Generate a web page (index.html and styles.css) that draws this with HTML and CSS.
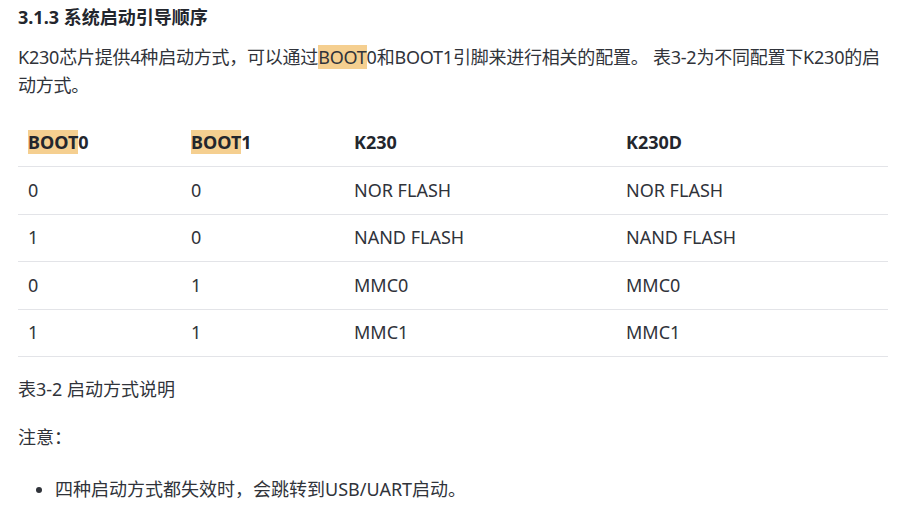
FILE: index.html
```html
<!DOCTYPE html>
<html lang="zh-CN">
<head>
<meta charset="utf-8">
<title>3.1.3 系统启动引导顺序</title>
<link rel="stylesheet" href="styles.css">
</head>
<body>
<main class="doc">
  <h3 class="title">3.1.3 系统启动引导顺序</h3>
  <p class="para">K230芯片提供4种启动方式，可以通过<mark class="hl">BOOT</mark>0和BOOT1引脚来进行相关的配置。 表3-2为不同配置下K230的启动方式。</p>
  <table class="tbl">
    <colgroup>
      <col class="c-narrow"><col class="c-narrow"><col class="c-wide"><col class="c-wide">
    </colgroup>
    <thead>
      <tr><th><mark class="hl">BOOT</mark>0</th><th><mark class="hl">BOOT</mark>1</th><th>K230</th><th>K230D</th></tr>
    </thead>
    <tbody>
      <tr><td>0</td><td>0</td><td>NOR FLASH</td><td>NOR FLASH</td></tr>
      <tr><td>1</td><td>0</td><td>NAND FLASH</td><td>NAND FLASH</td></tr>
      <tr><td>0</td><td>1</td><td>MMC0</td><td>MMC0</td></tr>
      <tr><td>1</td><td>1</td><td>MMC1</td><td>MMC1</td></tr>
    </tbody>
  </table>
  <p class="caption">表3-2 启动方式说明</p>
  <p class="note">注意：</p>
  <ul class="list">
    <li>四种启动方式都失效时，会跳转到USB/UART启动。</li>
  </ul>
</main>
</body>
</html>
```
FILE: styles.css
```css
html, body {
  margin: 0;
  padding: 0;
  background: #ffffff;
}
body {
  font-family: "Noto Sans", "Noto Sans CJK SC", sans-serif;
  color: #30333a;
  font-size: 18px;
  line-height: 28px;
}
.doc {
  width: 870px;
  padding: 0 0 0 18px;
}
.title {
  margin: 0;
  padding-top: 3px;
  font-size: 18px;
  line-height: 28px;
  font-weight: 700;
  color: #23262d;
}
.para {
  margin: 12px 0 0 0;
  letter-spacing: -0.22px;
}
.hl {
  background: #f5cf90;
  color: inherit;
}
.tbl {
  margin-top: 20px;
  width: 870px;
  border-collapse: collapse;
  table-layout: fixed;
}
.c-narrow { width: 163px; }
.c-wide { width: 272px; }
.tbl th, .tbl td {
  text-align: left;
  padding: 9px 10px 10px 10px;
  line-height: 28px;
  border-bottom: 1px solid #e3e4e8;
}
.tbl td {
  padding-top: 8.5px;
  padding-bottom: 10px;
}
.tbl th {
  font-weight: 700;
  color: #23262d;
}
.caption {
  margin: 18px 0 0 0;
}
.note {
  margin: 20px 0 0 0;
}
.list {
  margin: 24px 0 0 0;
  padding-left: 37px;
}
```
